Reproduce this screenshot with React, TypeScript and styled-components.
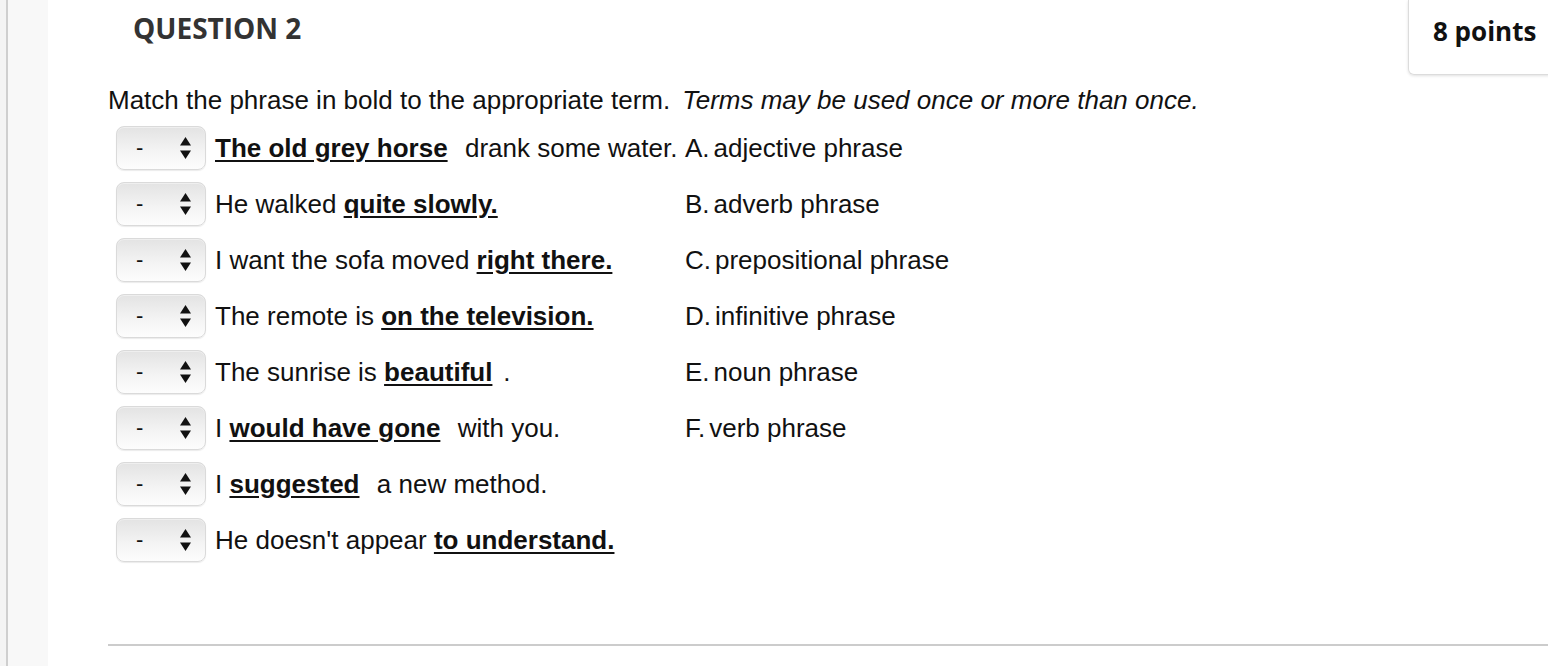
import React from 'react'
import styled, { createGlobalStyle } from 'styled-components'

const GlobalStyle = createGlobalStyle`
    html, body {
        margin: 0;
        padding: 0;
        background: #fff;
    }
    body {
        font-family: "Liberation Sans", Arial, sans-serif;
        color: #111;
    }
`

const Page = styled.div`
    display: flex;
    width: 1548px;
    height: 666px;
    overflow: hidden;
`

const SideRail = styled.div`
    flex: 0 0 48px;
    background: #f8f8f8;
    display: flex;

    &::before {
        content: '';
        width: 6px;
        background: #f4f4f4;
        border-right: 2px solid #cfcfcf;
    }
`

const Main = styled.div`
    flex: 1;
    display: flex;
    flex-direction: column;
    min-width: 0;
`

const Header = styled.div`
    display: flex;
    justify-content: space-between;
    align-items: flex-start;
`

const Title = styled.h2`
    margin: 9px 0 0 85px;
    font-family: "Open Sans", sans-serif;
    font-weight: 700;
    font-size: 28px;
    line-height: 38px;
    color: #333;
`

const PointsBox = styled.div`
    width: 142px;
    height: 75px;
    box-sizing: border-box;
    margin-right: -2px;
    padding: 13px 0 0 24px;
    border: 1px solid #dcdcdc;
    border-top: none;
    border-bottom-left-radius: 6px;
    box-shadow: 0 1px 3px rgba(0, 0, 0, 0.12);
    font-family: "Open Sans", sans-serif;
    font-weight: 700;
    font-size: 26px;
    line-height: 36px;
    color: #111;
`

const Body = styled.div`
    padding-left: 60px;
    display: flex;
    flex-direction: column;
`

const Instruction = styled.p`
    margin: 10px 0 0 0;
    font-size: 26px;
    line-height: 30px;

    em {
        margin-left: 12px;
    }
`

const MatchTable = styled.div`
    display: grid;
    grid-template-columns: 107px 470px auto;
    grid-auto-rows: 56px;
    margin-top: 5px;
    align-items: center;
`

const SelectBox = styled.div`
    margin-left: 8px;
    width: 90px;
    height: 44px;
    box-sizing: border-box;
    display: flex;
    align-items: center;
    justify-content: space-between;
    padding: 0 14px 0 19px;
    border: 1px solid #dadada;
    border-radius: 8px;
    background: linear-gradient(#e3e3e3, #f3f3f3 55%, #fdfdfd);
    box-shadow: inset 0 1px 0 #efefef, 0 1px 1px rgba(0, 0, 0, 0.08);
    font-size: 22px;
    color: #111;
`

const Phrase = styled.div`
    font-size: 26px;
    line-height: 30px;
    white-space: nowrap;

    b {
        font-weight: 700;
        text-decoration: underline;
        text-underline-offset: 3px;
    }
`

const Term = styled.div`
    font-size: 26px;
    line-height: 30px;
    white-space: nowrap;

    span {
        margin-right: 4px;
    }
`

const Divider = styled.hr`
    margin: 76px 0 0 0;
    border: none;
    border-top: 2px solid #cccccc;
`

const Arrows = () => (
    <svg width="11" height="22" viewBox="0 0 11 22">
        <path d="M5.5 0 L11 8.5 L0 8.5 Z" fill="#111" />
        <path d="M5.5 22 L11 13.5 L0 13.5 Z" fill="#111" />
    </svg>
)

const Select = () => (
    <SelectBox>
        <span>-</span>
        <Arrows />
    </SelectBox>
)

// wider gap the quiz engine leaves after a bold blank
const GAP = '\u2002\u2006'
const DOT_GAP = '\u2005\u2006'

const phrases: React.ReactNode[] = [
    <><b>The old grey horse</b>{GAP}drank some water.</>,
    <>He walked <b>quite slowly.</b></>,
    <>I want the sofa moved <b>right there.</b></>,
    <>The remote is <b>on the television.</b></>,
    <>The sunrise is <b>beautiful</b>{DOT_GAP}.</>,
    <>I <b>would have gone</b>{GAP}with you.</>,
    <>I <b>suggested</b>{GAP}a new method.</>,
    <>He doesn't appear <b>to understand.</b></>,
]

const terms = [
    ['A.', 'adjective phrase'],
    ['B.', 'adverb phrase'],
    ['C.', 'prepositional phrase'],
    ['D.', 'infinitive phrase'],
    ['E.', 'noun phrase'],
    ['F.', 'verb phrase'],
]

const App: React.FC = () => {
    return (
        <>
            <GlobalStyle />
            <Page>
                <SideRail />
                <Main>
                    <Header>
                        <Title>QUESTION 2</Title>
                        <PointsBox>8 points</PointsBox>
                    </Header>
                    <Body>
                        <Instruction>
                            Match the phrase in bold to the appropriate term.
                            <em>Terms may be used once or more than once.</em>
                        </Instruction>
                        <MatchTable>
                            {phrases.map((phrase, i) => (
                                <React.Fragment key={i}>
                                    <Select />
                                    <Phrase>{phrase}</Phrase>
                                    <Term>
                                        {terms[i] && (
                                            <>
                                                <span>{terms[i][0]}</span>
                                                {terms[i][1]}
                                            </>
                                        )}
                                    </Term>
                                </React.Fragment>
                            ))}
                        </MatchTable>
                        <Divider />
                    </Body>
                </Main>
            </Page>
        </>
    )
}

export default App
